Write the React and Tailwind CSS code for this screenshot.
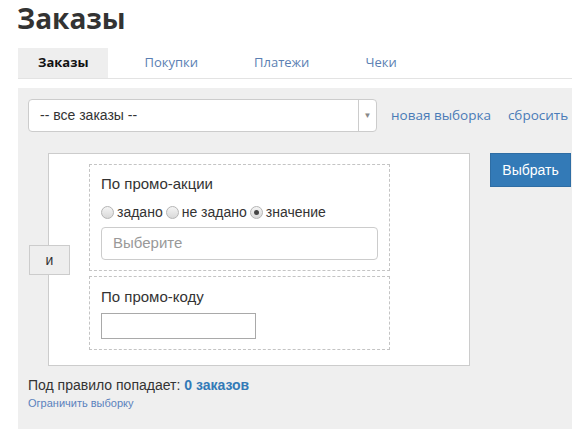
import React from 'react'

const tabs = ['Заказы', 'Покупки', 'Платежи', 'Чеки']

function Radio({ checked, label }) {
  return (
    <label className="flex items-center gap-[3px]">
      <span className="w-[13px] h-[13px] rounded-full border border-[#b5b5b5] bg-gradient-to-b from-[#f4f4f4] to-[#d9d9d9] flex items-center justify-center">
        {checked && <span className="w-[5px] h-[5px] rounded-full bg-[#444]" />}
      </span>
      <span>{label}</span>
    </label>
  )
}

export default function App() {
  return (
    <div className="w-[572px] h-[429px] overflow-hidden bg-white text-[#333]" style={{ fontFamily: '"Liberation Sans", Arial, sans-serif' }}>
      {/* Title */}
      <h1 className="pl-[17px] h-[48px] text-[28px] font-bold leading-[36px] text-[#333]" style={{ fontFamily: '"Open Sans", sans-serif' }}>
        Заказы
      </h1>

      {/* Tabs */}
      <div className="ml-[18px] flex gap-4 h-[31px] border-b border-[#e3e3e3]" style={{ fontFamily: '"Open Sans", sans-serif' }}>
        {tabs.map((t, i) => (
          <div
            key={t}
            className={
              i === 0
                ? 'px-5 h-[30px] flex items-center bg-[#eee] text-[13px] font-bold text-[#111]'
                : 'px-5 h-[30px] flex items-center text-[13px] text-[#5b7fb3]'
            }
          >
            {t}
          </div>
        ))}
      </div>

      {/* Gray panel */}
      <div className="ml-[18px] mt-[9px] bg-[#efefef] h-[400px] pl-[10px] pt-[11px]">
        <div className="flex items-center whitespace-nowrap">
          <div className="w-[349px] h-[33px] shrink-0 bg-white border border-[#ccc] rounded-[4px] flex items-center">
            <span className="flex-1 pl-[11px] text-[14px] text-[#333]">-- все заказы --</span>
            <span className="w-[18px] h-full border-l border-[#ccc] flex items-center justify-center text-[8px] text-[#888]">▼</span>
          </div>
          <span className="ml-[14px] text-[13.5px] text-[#4a7bb7]" style={{ fontFamily: '"Open Sans", sans-serif' }}>новая выборка</span>
          <span className="ml-[17px] text-[13.5px] text-[#4a7bb7]" style={{ fontFamily: '"Open Sans", sans-serif' }}>сбросить</span>
        </div>

        <div className="flex mt-[21px]">
          {/* Rule box */}
          <div className="relative ml-[20px] w-[422px] bg-white border border-[#ccc] pl-[40px] pt-[10px] pb-[15px]">
            <div className="absolute left-[-20px] top-[91px] w-[41px] h-[30px] bg-[#eee] border border-[#ccc] flex items-center justify-center text-[14px] text-[#333]">
              и
            </div>

            <div className="w-[301px] border border-dashed border-[#c4c4c4] px-[11px] pt-[11px] pb-[10px] text-[14px]">
              <div className="leading-[16px] text-[15px]">По промо-акции</div>
              <div className="flex items-center gap-[3px] mt-[12px] leading-[16px]">
                <Radio label="задано" />
                <Radio label="не задано" />
                <Radio label="значение" checked />
              </div>
              <div className="mt-[7px] h-[33px] w-[277px] border border-[#ccc] rounded-[4px] flex items-center pl-[11px] text-[15px] text-[#999]">
                Выберите
              </div>
            </div>

            <div className="mt-[5px] w-[301px] border border-dashed border-[#c4c4c4] px-[11px] pt-[12px] pb-[10px] text-[14px]">
              <div className="leading-[16px] text-[15px]">По промо-коду</div>
              <div className="mt-[8px] h-[26px] w-[155px] border border-[#a9a9a9] bg-white" />
            </div>
          </div>

          <div className="ml-[20px] w-[81px] h-[34px] bg-[#337ab7] border border-[#2e6da4] text-white text-[14px] flex items-center justify-center">
            Выбрать
          </div>
        </div>

        <div className="mt-[11px] text-[14px] leading-[16px] text-[#333]">
          Под правило попадает: <span className="font-bold text-[#337ab7]">0 заказов</span>
        </div>
        <div className="mt-[3px] text-[11px] leading-[14px] text-[#5b82bd]">Ограничить выборку</div>
      </div>
    </div>
  )
}
